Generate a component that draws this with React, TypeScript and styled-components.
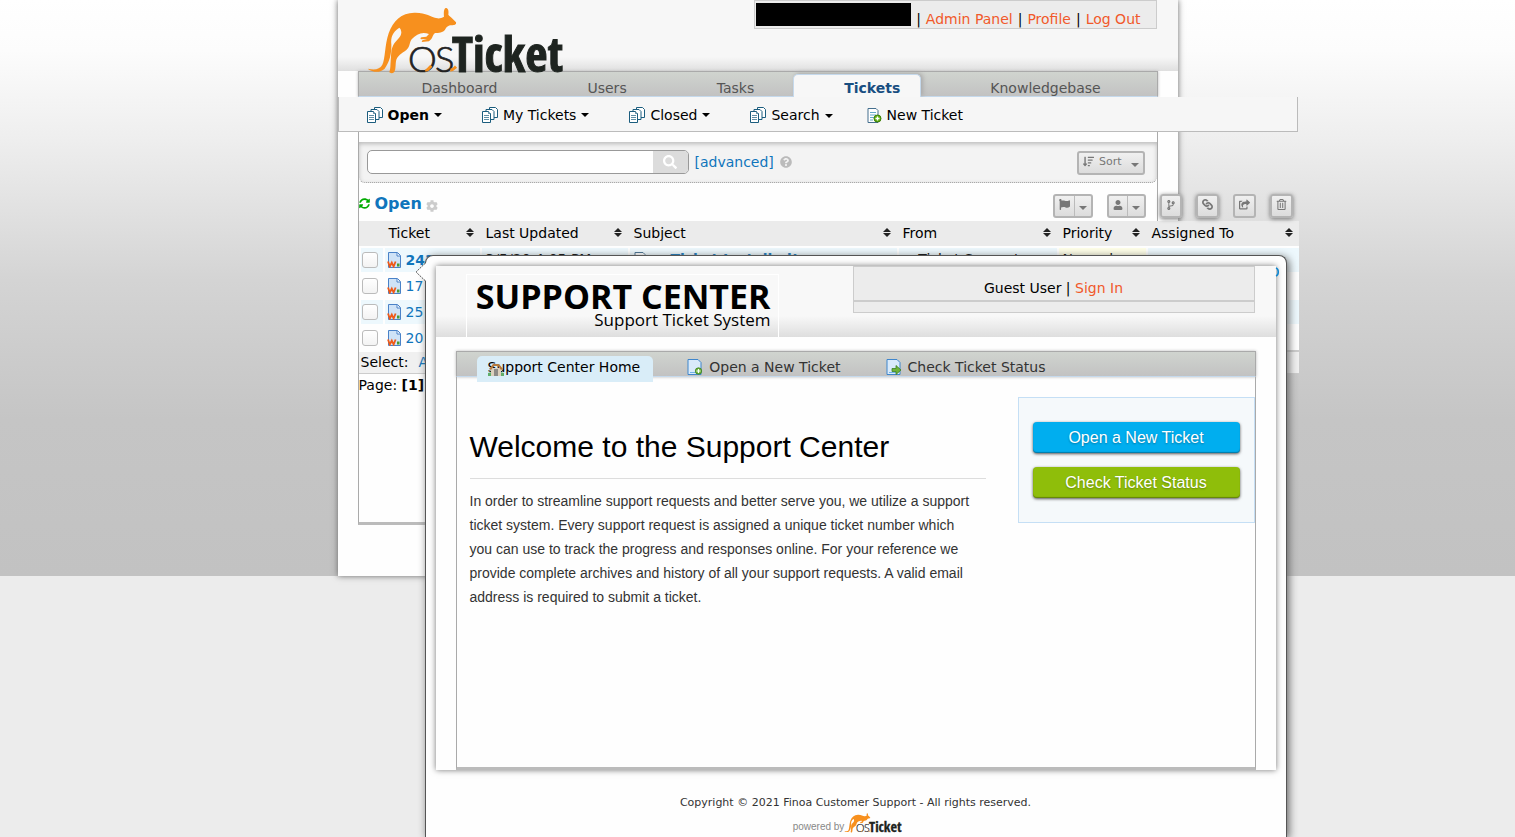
import React from 'react';
import styled, { createGlobalStyle, css } from 'styled-components';
import {
  FaSyncAlt,
  FaCog,
  FaFlag,
  FaUser,
  FaCodeBranch,
  FaLink,
  FaShareSquare,
  FaRegTrashAlt,
  FaQuestionCircle,
  FaSortAmountDown,
  FaSearch,
} from 'react-icons/fa';

const GlobalStyle = createGlobalStyle`
  *, *::before, *::after { box-sizing: border-box; }
  body {
    margin: 0;
    background: #ececec;
    color: #000;
    font: 14px/20px 'DejaVu Sans', sans-serif;
  }
  a { color: inherit; text-decoration: none; }
  button, input { font: inherit; margin: 0; }
  h1, h2, p { margin: 0; }
`;

const Desktop = styled.div`
  display: grid;
  grid-template-columns: minmax(0, 1fr) 840px minmax(0, 1fr);
  align-items: start;
  min-height: 100vh;
  overflow: hidden;
  background: linear-gradient(#fff 0, #fcfcfc 50px, #eee 140px, #d4d4d4 280px, #c5c5c5 420px, #c2c2c2 576px) 0 0 / 100% 576px
    no-repeat #ececec;
`;

/* ---------- agent panel ---------- */

const StaffPage = styled.div`
  grid-area: 1 / 2;
  min-height: 576px;
  background: #fefefe;
  box-shadow: 0 0 6px #666;
`;

const StaffHeader = styled.header`
  display: flex;
  justify-content: space-between;
  align-items: flex-start;
  height: 71px;
  padding: 0 21px 0 29px;
  background: linear-gradient(#f7f7f7 57px, #dfdfdf);
`;

const LogoLink = styled.a`
  display: block;
  position: relative;
  z-index: 1;
  padding-top: 7px;
`;

const LogoSvg = styled.svg`
  display: block;
  overflow: visible;
`;

const AccountBar = styled.div`
  display: flex;
  align-items: flex-start;
  gap: 5px;
  height: 29px;
  padding: 0 15px 0 1px;
  border: 1px solid #ccc;
  background: #ececec;
  white-space: nowrap;
  line-height: 36px;
`;

const Redacted = styled.span`
  width: 155px;
  height: 23px;
  margin-top: 2px;
  background: #000;
`;

const OrangeLink = styled.a`
  color: #f1592a;
`;

const MainNav = styled.nav`
  display: flex;
  align-items: flex-end;
  gap: 18px;
  height: 26px;
  margin: 0 20px;
  padding-left: 12px;
  border: 1px solid #aaa;
  border-bottom-color: #c5d9ec;
  background: linear-gradient(#d0d4cf, #c2c2c2);
  box-shadow: 0 0 3px #bbb;
`;

const MainTab = styled.a<{ $active?: boolean }>`
  height: 22px;
  padding: 0 20px 0 50px;
  border: 1px solid transparent;
  border-bottom: 0;
  line-height: 26px;
  color: #555;
  ${(p) =>
    p.$active &&
    css`
      height: 23px;
      margin-bottom: -1px;
      border-color: #c5d9ec;
      border-radius: 5px 5px 0 0;
      background: #f7f7f7;
      box-shadow: 2px -1px 4px #aaa;
      color: #184e81;
      font-weight: bold;
    `}
`;

const SubNav = styled.nav`
  position: relative;
  display: flex;
  align-items: center;
  gap: 34px;
  width: 960px;
  height: 35px;
  padding: 2px 28px 0;
  border: 1px solid #bbb;
  border-top: 0;
  background: #f6f6f6;
`;

const SubLink = styled.a<{ $active?: boolean }>`
  display: flex;
  align-items: center;
  gap: 5px;
  font-weight: ${(p) => (p.$active ? 'bold' : 'normal')};
`;

const Caret = styled.span<{ $wide?: boolean }>`
  margin: ${(p) => (p.$wide ? '2px 0 0' : '0 6px 0 0')};
  border: 4px solid transparent;
  border-bottom: 0;
  border-top-color: currentColor;
`;

const StaffContent = styled.main`
  height: 393px;
  margin: 0 20px;
  padding-top: 10px;
  border: 1px solid #aaa;
  border-top: 0;
  border-bottom: 3px solid #bbb;
  background: #fefefe;
`;

const SearchStrip = styled.form`
  display: flex;
  align-items: center;
  height: 41px;
  padding: 0 12px 0 8px;
  border-bottom: 1px dotted #999;
  border-radius: 0 0 6px 6px;
  background: #f3f3f3;
  box-shadow: inset 0 2px 4px #bbb;
`;

const SearchBox = styled.div`
  display: flex;
  width: 322px;
  height: 24px;
  overflow: hidden;
  border: 1px solid #999;
  border-radius: 5px;
  background: #fff;
`;

const SearchInput = styled.input`
  flex: 1;
  min-width: 0;
  padding: 0 6px;
  border: 0;
  background: none;
`;

const SearchButton = styled.button`
  display: flex;
  align-items: center;
  justify-content: center;
  width: 35px;
  border: 0;
  background: #dcdcdc;
  color: #fff;
`;

const BlueLink = styled.a<{ $bold?: boolean }>`
  color: #0f75bc;
  font-weight: ${(p) => (p.$bold ? 'bold' : 'normal')};
`;

const Advanced = styled(BlueLink)`
  margin: 0 6px;
`;

const Push = styled.span`
  flex: 1;
`;

const ToolButton = styled.button<{ $raised?: boolean }>`
  display: flex;
  align-items: center;
  height: 24px;
  padding: 0 4px 3px;
  border: 2px solid #b4b4b4;
  border-radius: 3px;
  background: linear-gradient(#f0f0f0, #dcdcdc);
  box-shadow: ${(p) => (p.$raised ? '0 1px 4px #777' : 'none')};
  color: #777;
  font-size: 11px;
  line-height: 16px;
`;

const SortButton = styled(ToolButton)`
  gap: 5px;
  margin-top: 2px;
`;

const ToolCaret = styled(Caret)`
  margin: 6px 0 0 4px;
`;

const SplitCaret = styled(Caret)`
  margin: 6px 0 0;
`;

const SplitLine = styled.span`
  width: 1px;
  height: 20px;
  margin: 3px 4px 0 4px;
  background: #bbb;
`;

const TitleRow = styled.div`
  display: flex;
  align-items: center;
  width: 940px;
  height: 38px;
  padding: 3px 6px 0 0;
`;

const Tools = styled.div`
  display: flex;
  gap: 14px;
  padding-top: 5px;
`;

const QueueTitle = styled.h2`
  margin: 0 4px 0 5px;
  color: #0f75bc;
  font-size: 16px;
  line-height: 20px;
`;

const RefreshIcon = styled(FaSyncAlt)`
  color: #0a0;
`;

const GearIcon = styled(FaCog)`
  margin-top: 5px;
  color: #ccc;
`;

const ChainIcon = styled(FaLink)`
  transform: rotate(90deg);
`;

const QueueTable = styled.table`
  width: 940px;
  border-collapse: separate;
  border-spacing: 0;
  table-layout: fixed;
  background: #fefefe;
  th, td {
    text-align: left;
    font-weight: normal;
    white-space: nowrap;
  }
  th { height: 25px; padding: 0 6px 2px; background: #ebebeb; }
  td { height: 26px; padding: 0 4px 2px; border: 0 solid #fefefe; border-width: 2px 0 0 2px; }
  td:first-child { padding: 0 0 0 1px; }
  td:nth-child(2) { padding: 0 0 1px 2px; }
  tbody tr:nth-child(odd) td { background: #edf8fd; }
  tbody tr td.priority { background: #ffffe8; }
`;

const SortHead = styled.a`
  display: flex;
  align-items: center;
  justify-content: space-between;
`;

const Tick = styled.input`
  display: block;
  appearance: none;
  width: 16px;
  height: 16px;
  border: 1px solid #bbb;
  border-radius: 3px;
  background: linear-gradient(#fff, #f3f3f3);
`;

const TicketRef = styled.span`
  display: flex;
  align-items: center;
  gap: 4px;
`;

const SelectBar = styled.div`
  display: flex;
  gap: 10px;
  width: 940px;
  height: 22px;
  margin-top: 2px;
  padding-left: 2px;
  border-bottom: 1px solid #ccc;
  background: #f0f0f0;
`;

const Pager = styled.div`
  padding-top: 1px;
`;

/* ---------- client portal window ---------- */

const Portal = styled.section`
  grid-area: 1 / 2;
  position: relative;
  width: 862px;
  height: 582px;
  margin: 255px 0 0 87px;
  padding: 10px 10px 0;
  border: 1px solid #555;
  border-bottom: 0;
  border-radius: 8px 8px 0 0;
  background: #fefefe;
  box-shadow: 2px 2px 8px #666;
`;

const Pointer = styled.svg`
  position: absolute;
  top: 6px;
  left: -11px;
`;

const Peek = styled.svg`
  position: absolute;
  top: 11px;
  left: 848px;
`;

const PortalFrame = styled.div`
  height: 504px;
  background: #fefefe;
  box-shadow: 0 0 6px #777;
`;

const PortalHeader = styled.header`
  display: flex;
  justify-content: space-between;
  align-items: flex-start;
  height: 71px;
  padding: 0 21px 0 30px;
  background: linear-gradient(#f8f8f8 50px, #dedede);
`;

const PortalLogo = styled.a`
  display: flex;
  flex-direction: column;
  align-items: flex-end;
  width: 313px;
  height: 63px;
  margin-top: 8px;
  padding: 2px 7px 0 0;
  border: 1px solid #fff;
  border-bottom: 0;
  font-family: 'Open Sans', 'Noto Sans', sans-serif;
  white-space: nowrap;
`;

const LogoTitle = styled.span`
  font-size: 34px;
  line-height: 38px;
  font-weight: bold;
`;

const LogoTagline = styled.span`
  font-size: 17px;
  line-height: 20px;
  margin-top: -5px;
`;

const GuestBar = styled.div`
  width: 402px;
  height: 47px;
  border: 1px solid #ccc;
  background: #ececec;
  text-align: center;
`;

const GuestLine = styled.p`
  height: 35px;
  border-bottom: 2px solid #ccc;
  line-height: 42px;
`;

const PortalNav = styled.nav`
  display: flex;
  align-items: flex-start;
  height: 26px;
  margin: 14px 20px 0;
  padding: 4px 20px 0;
  border: 1px solid #aaa;
  border-bottom-color: #c5d9ec;
  background: linear-gradient(#d0d4cf, #c2c2c2);
  box-shadow: 0 0 3px #bbb;
`;

const PortalTab = styled.a<{ $active?: boolean }>`
  position: relative;
  display: flex;
  align-items: center;
  gap: 6px;
  height: 22px;
  margin-right: 45px;
  color: #333;
  ${(p) =>
    p.$active &&
    css`
      height: 26px;
      margin-right: 34px;
      padding: 0 13px 4px 11px;
      border-radius: 5px 5px 0 0;
      background: #d9edf8;
      color: #000;
    `}
`;

const HomeMark = styled.svg`
  position: absolute;
  top: 6px;
  left: 11px;
`;

const PortalBody = styled.main`
  display: flex;
  align-items: flex-start;
  justify-content: space-between;
  height: 393px;
  margin: 0 20px;
  padding: 20px 0 0 13px;
  border: 1px solid #aaa;
  border-top: 0;
  border-bottom: 3px solid #bbb;
  font-family: 'Liberation Sans', Arial, sans-serif;
`;

const Article = styled.article`
  width: 516px;
  h1 {
    padding: 30px 0 11px;
    border-bottom: 1px solid #ddd;
    font-size: 30px;
    line-height: 40px;
    font-weight: normal;
  }
  p {
    max-width: 504px;
    padding-top: 10px;
    color: #333;
    font-size: 14px;
    line-height: 24px;
  }
`;

const SideBox = styled.aside`
  display: flex;
  flex-direction: column;
  gap: 14px;
  width: 237px;
  height: 126px;
  padding: 24px 14px;
  border: 1px solid #c5dff5;
  background: #f5f9fb;
`;

const ActionButton = styled.button<{ $color: string }>`
  height: 31px;
  padding: 0;
  border: 0;
  border-radius: 4px;
  background: ${(p) => p.$color};
  box-shadow: 0 1px 3px #555, inset 0 -1px 1px rgba(0, 0, 0, 0.3);
  color: #fff;
  font-size: 16px;
  line-height: 31px;
  text-shadow: 0 1px 2px rgba(0, 0, 0, 0.3);
`;

const PortalFooter = styled.footer`
  display: flex;
  flex-direction: column;
  align-items: center;
  padding-top: 25px;
  color: #333;
  font-size: 11px;
  line-height: 16px;
`;

const Powered = styled.a`
  display: flex;
  align-items: flex-end;
  margin-top: 2px;
  padding-right: 16px;
  color: #888;
  font: 10px/12px 'Liberation Sans', Arial, sans-serif;
`;

/* ---------- drawings ---------- */

const OsTicketLogo = ({ width, height }: { width: number; height: number }) => (
  <LogoSvg width={width} height={height} viewBox="111 21 591 204" role="img" aria-label="osTicket">
    <path
      fill="#f7901e"
      d="M113 206c22 5 36 2 44-12 9-16 7-60 19-94 13-38 38-61 77-62 35-1 48 13 69 17 8 1 13-2 20-5-1-11-1-23 5-26 7 0 10 8 8 20 3 4 7 6 11 11l12 12c2 7-5 9-13 9-11 0-15 5-20 13-6 8-19 10-30 10-6 5-7 12-11 18l-7 7-22 2 2-5 14-4-18 1c-3-2-1-5 2-6l14-2 8-8c-21-8-37 0-52 16-7 9-5 24-16 32-12 9-29 18-31 34-2 13 0 25-6 33-4 4-13 3-14-1 4-10 3-22 4-34 2-16 0-32 8-47 6-12 24-22 24-38-1-8-3-12-6-14-21 13-26 30-24 50 1 27-5 54-20 73-12 12-34 13-51 0z"
    />
    <g fontFamily="'Lato', sans-serif" fontWeight="300" fontSize="109" fill="#222" stroke="#222" strokeWidth="2">
      <text x="234" y="215">O</text>
      <text x="315" y="215">S</text>
    </g>
    <path d="M287 209c6 4 10-4 17-12M361 210c7 1 11-4 17-10" stroke="#f7901e" strokeWidth="9" fill="none" />
    <text
      x="366"
      y="215"
      fontFamily="'Liberation Sans Narrow', 'Open Sans Condensed', 'DejaVu Sans Condensed', sans-serif"
      fontWeight="bold"
      fontSize="145"
      fill="#1e2420"
      stroke="#1e2420"
      strokeWidth="3"
    >
      Ticket
    </text>
  </LogoSvg>
);

const StackIcon = () => (
  <svg width="16" height="16" viewBox="0 0 16 16" fill="#fff" stroke="#1b5d7e">
    <path d="M7.500.5h6l2 2v8h-8z" />
    <path d="M4 2.500h6l2 2v8H4z" />
    <path d="M.5 4.500h6l2 2v9h-8z" />
    <path d="M6.500 4.500v2h2M2 8.500h5M2 10.500h5M2 12.500h5" strokeWidth=".7" />
  </svg>
);

const NewDocIcon = () => (
  <svg width="15" height="15" viewBox="0 0 15 15" fill="none">
    <path d="M1 .5h8l2 2v12H1z" fill="#fff" stroke="#456f8e" />
    <path d="M3 4.500h6M3 7h6M3 9.500h4M3 12h3" stroke="#65a9c9" />
    <circle cx="10.500" cy="10.500" r="3.500" fill="#60b010" stroke="#3c7d06" />
    <path d="M8.500 10.500h4M10.500 8.500v4" stroke="#fff" strokeWidth="1.300" />
  </svg>
);

const WebTicketIcon = () => (
  <svg width="15" height="16" viewBox="0 0 15 16" fill="none">
    <path d="M1.500.5h9l3 3v12h-12z" fill="#cfe3f7" stroke="#4a82c8" />
    <path d="M10 1v3h3" fill="#fff" stroke="#4a82c8" />
    <path d="M1 9.500l1.800 5 2-4 1.800 4 2-5" stroke="#f05a18" strokeWidth="1.800" />
    <path d="M10 14.500v-3h2.500v3z" fill="#4a9a30" />
  </svg>
);

const PageIcon = ({ arrow }: { arrow?: boolean }) => (
  <svg width="16" height="16" viewBox="0 0 16 16" fill="none">
    <path d="M1 .5h10l3 3v12H1z" fill="#d9eafa" stroke="#3f86cc" />
    <path d="M3 13.500h8" stroke="#72b2e6" />
    {arrow ? (
      <path d="M6 9.500h4v-3l5 4.500-5 4.500v-3H6z" fill="#6db33a" stroke="#3c8020" strokeWidth=".8" />
    ) : (
      <>
        <circle cx="11.500" cy="12" r="3.200" fill="#6db33a" stroke="#3c8020" strokeWidth=".8" />
        <path d="M9.500 12h4M11.500 10v4" stroke="#fff" strokeWidth="1.200" />
      </>
    )}
  </svg>
);

const SortArrows = () => (
  <svg width="8" height="9" viewBox="0 0 8 9" fill="#222">
    <path d="M4 0l4 4H0zM0 5h8L4 9z" />
  </svg>
);

/* ---------- data ---------- */

const mainTabs = ['Dashboard', 'Users', 'Tasks', 'Tickets', 'Knowledgebase'];
const queues = ['Open', 'My Tickets', 'Closed', 'Search'];
const columns = ['Ticket', 'Last Updated', 'Subject', 'From', 'Priority', 'Assigned To'];
const columnWidths = [24, 97, 148, 269, 160, 89, 153];

const tickets = [
  { id: '243948', updated: '3/5/20 4:05 PM', subject: 'osTicket Installed!', from: 'osTicket Support', priority: 'Normal' },
  { id: '17', updated: '', subject: '', from: '', priority: '' },
  { id: '25', updated: '', subject: '', from: '', priority: '' },
  { id: '20', updated: '', subject: '', from: '', priority: '' },
];

const App = () => (
  <>
    <GlobalStyle />
    <Desktop>
      <StaffPage>
        <StaffHeader>
          <LogoLink href="#">
            <OsTicketLogo width={197} height={68} />
          </LogoLink>
          <AccountBar>
            <Redacted />
            <span>|</span>
            <OrangeLink href="#">Admin Panel</OrangeLink>
            <span>|</span>
            <OrangeLink href="#">Profile</OrangeLink>
            <span>|</span>
            <OrangeLink href="#">Log Out</OrangeLink>
          </AccountBar>
        </StaffHeader>
        <MainNav>
          {mainTabs.map((tab) => (
            <MainTab key={tab} href="#" $active={tab === 'Tickets'}>
              {tab}
            </MainTab>
          ))}
        </MainNav>
        <SubNav>
          {queues.map((queue) => (
            <SubLink key={queue} href="#" $active={queue === 'Open'}>
              <StackIcon />
              {queue}
              <Caret $wide={queue === 'Search'} />
            </SubLink>
          ))}
          <SubLink href="#">
            <NewDocIcon />
            New Ticket
          </SubLink>
        </SubNav>
        <StaffContent>
          <SearchStrip>
            <SearchBox>
              <SearchInput type="text" aria-label="Search tickets" />
              <SearchButton type="button" aria-label="Search">
                <FaSearch size={14} />
              </SearchButton>
            </SearchBox>
            <Advanced href="#">[advanced]</Advanced>
            <FaQuestionCircle size={12} color="#bbb" />
            <Push />
            <SortButton type="button">
              <FaSortAmountDown size={11} />
              Sort
              <ToolCaret />
            </SortButton>
          </SearchStrip>
          <TitleRow>
            <RefreshIcon size={11} />
            <QueueTitle>Open</QueueTitle>
            <GearIcon size={12} />
            <Push />
            <Tools>
              <ToolButton type="button" aria-label="Change status">
                <FaFlag size={11} />
                <SplitLine />
                <SplitCaret />
              </ToolButton>
              <ToolButton type="button" aria-label="Assign">
                <FaUser size={10} />
                <SplitLine />
                <SplitCaret />
              </ToolButton>
              <ToolButton type="button" aria-label="Merge" $raised>
                <FaCodeBranch size={10} />
              </ToolButton>
              <ToolButton type="button" aria-label="Link" $raised>
                <ChainIcon size={11} />
              </ToolButton>
              <ToolButton type="button" aria-label="Transfer">
                <FaShareSquare size={11} />
              </ToolButton>
              <ToolButton type="button" aria-label="Delete" $raised>
                <FaRegTrashAlt size={11} />
              </ToolButton>
            </Tools>
          </TitleRow>
          <QueueTable>
            <colgroup>
              {columnWidths.map((w, i) => (
                <col key={i} width={w} />
              ))}
            </colgroup>
            <thead>
              <tr>
                <th />
                {columns.map((c) => (
                  <th key={c}>
                    <SortHead href="#">
                      {c}
                      <SortArrows />
                    </SortHead>
                  </th>
                ))}
              </tr>
            </thead>
            <tbody>
              {tickets.map((t, i) => (
                <tr key={t.id}>
                  <td>
                    <Tick type="checkbox" aria-label={`Select ticket ${t.id}`} />
                  </td>
                  <td>
                    <TicketRef>
                      <WebTicketIcon />
                      <BlueLink href="#" $bold={i === 0}>
                        {t.id}
                      </BlueLink>
                    </TicketRef>
                  </td>
                  <td>{t.updated}</td>
                  <td>
                    <TicketRef>
                      {t.subject && <NewDocIcon />}
                      <BlueLink href="#" $bold>
                        {t.subject}
                      </BlueLink>
                    </TicketRef>
                  </td>
                  <td>{t.from}</td>
                  <td className={t.priority ? 'priority' : undefined}>{t.priority}</td>
                  <td />
                </tr>
              ))}
            </tbody>
          </QueueTable>
          <SelectBar>
            <span>Select:</span>
            <BlueLink href="#">All</BlueLink>
          </SelectBar>
          <Pager>
            Page: <b>[1]</b>
          </Pager>
        </StaffContent>
      </StaffPage>

      <Portal>
        <Pointer width="12" height="20" viewBox="0 0 12 20">
          <path d="M12 0L1 10l11 10z" fill="#fefefe" />
          <path d="M10.500 1L1 10l9.500 9" fill="none" stroke="#555" strokeDasharray="2 1" />
        </Pointer>
        <PortalFrame>
          <PortalHeader>
            <PortalLogo href="#">
              <LogoTitle>SUPPORT CENTER</LogoTitle>
              <LogoTagline>Support Ticket System</LogoTagline>
            </PortalLogo>
            <GuestBar>
              <GuestLine>
                Guest User | <OrangeLink href="#">Sign In</OrangeLink>
              </GuestLine>
            </GuestBar>
          </PortalHeader>
          <PortalNav>
            <PortalTab href="#" $active>
              <HomeMark width="16" height="15" viewBox="0 0 16 15">
                <path d="M0 14v-3l4-1 8 0 4 1v3z" fill="#5fae6a" />
                <path d="M3 6h10v8H3z" fill="#ddd0bd" />
                <path d="M6 7h4v7H6z" fill="#8d8a86" />
                <path d="M1 7l4-5h6l4 5-2 1-3-4H6L3 8z" fill="#b5793c" />
              </HomeMark>
              <span>Support Center Home</span>
            </PortalTab>
            <PortalTab href="#">
              <PageIcon />
              Open a New Ticket
            </PortalTab>
            <PortalTab href="#">
              <PageIcon arrow />
              Check Ticket Status
            </PortalTab>
          </PortalNav>
          <PortalBody>
            <Article>
              <h1>Welcome to the Support Center</h1>
              <p>
                In order to streamline support requests and better serve you, we utilize a support ticket system. Every
                support request is assigned a unique ticket number which you can use to track the progress and responses
                online. For your reference we provide complete archives and history of all your support requests. A
                valid email address is required to submit a ticket.
              </p>
            </Article>
            <SideBox>
              <ActionButton type="button" $color="#00aeef">
                Open a New Ticket
              </ActionButton>
              <ActionButton type="button" $color="#8fbe0a">
                Check Ticket Status
              </ActionButton>
            </SideBox>
          </PortalBody>
        </PortalFrame>
        <Peek width="6" height="10" viewBox="0 0 6 10">
          <path d="M2 1c3 1 3 7 0 8" fill="none" stroke="#0f86d0" strokeWidth="1.600" />
        </Peek>
        <PortalFooter>
          <span>Copyright © 2021 Finoa Customer Support - All rights reserved.</span>
          <Powered href="#">
            powered by
            <OsTicketLogo width={58} height={20} />
          </Powered>
        </PortalFooter>
      </Portal>
    </Desktop>
  </>
);

export default App;
